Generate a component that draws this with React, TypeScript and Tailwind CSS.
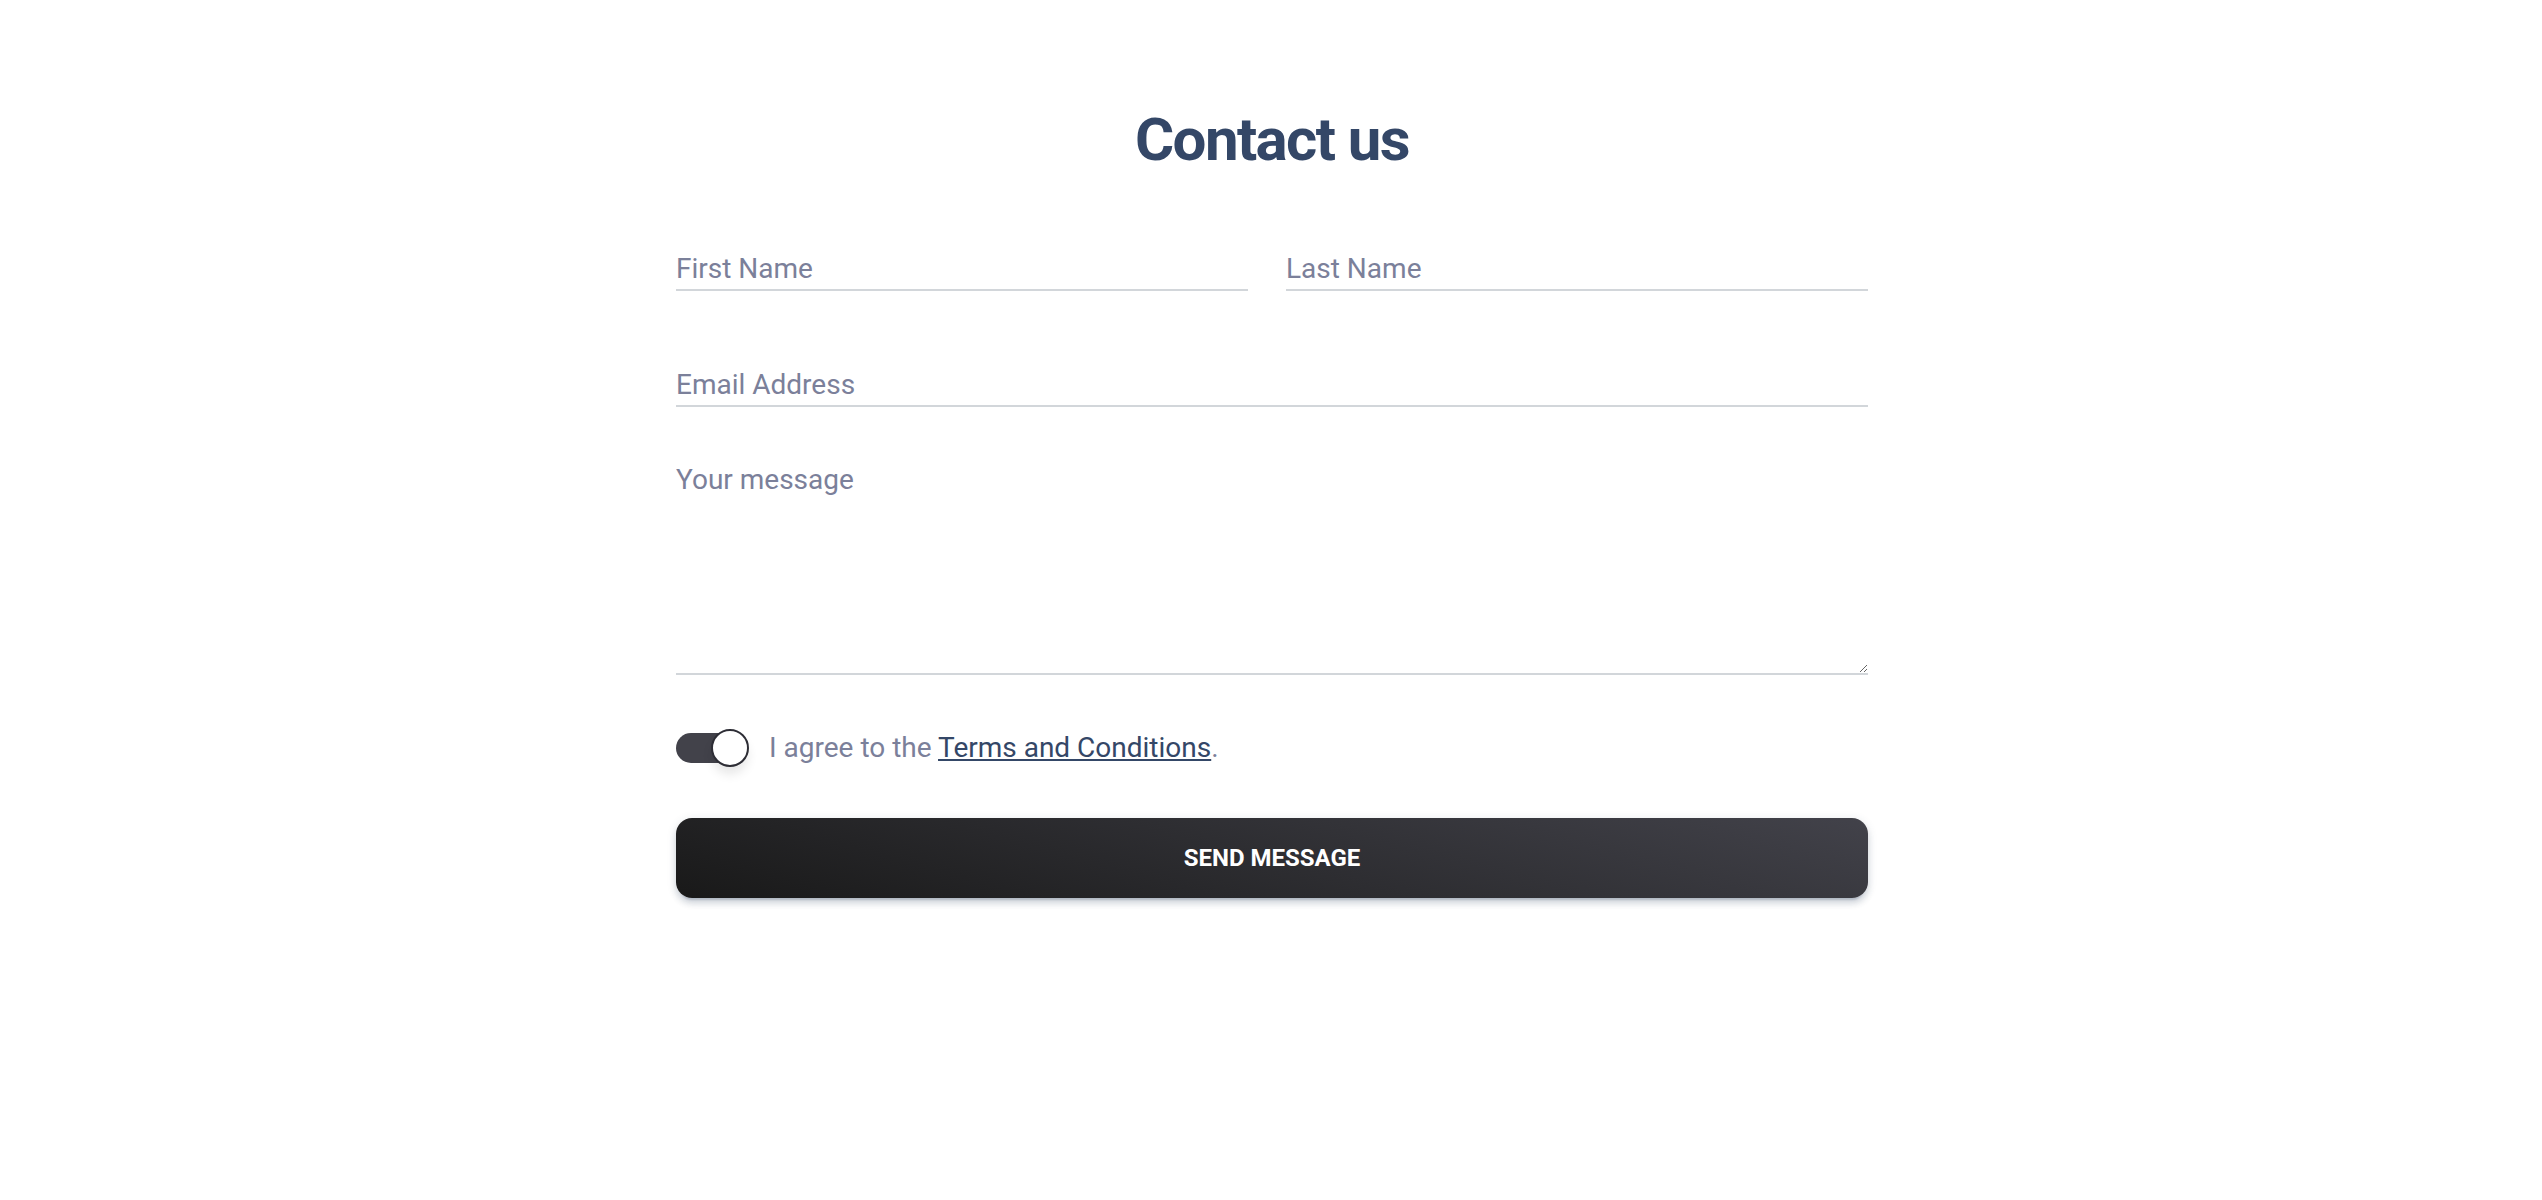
import React, { useState } from 'react';

const ContactForm = () => {
  const [agree, setAgree] = useState(true);

  return (
    <section className="min-h-screen bg-white pt-[99px] font-[Roboto,sans-serif]">
      <div className="mx-auto w-[1192px] translate-x-[1px]">
        <h3 className="text-center text-[60px] font-bold leading-[82px] tracking-[-1.6px] text-[#344767]">
          Contact us
        </h3>

        <form className="mt-[66px]" onSubmit={(e) => e.preventDefault()}>
          <div className="flex gap-[38px]">
            <input
              type="text"
              placeholder="First Name"
              className="h-[44px] w-[572px] border-b-2 border-[#d2d6da] text-[28px] text-[#495057] outline-none placeholder:text-[#7b809a]"
            />
            <input
              type="text"
              placeholder="Last Name"
              className="h-[44px] flex-1 border-b-2 border-[#d2d6da] text-[28px] text-[#495057] outline-none placeholder:text-[#7b809a]"
            />
          </div>

          <input
            type="email"
            placeholder="Email Address"
            className="mt-[72px] block h-[44px] w-full border-b-2 border-[#d2d6da] text-[28px] text-[#495057] outline-none placeholder:text-[#7b809a]"
          />

          <textarea
            placeholder="Your message"
            className="mt-[52px] block h-[216px] w-full border-b-2 border-[#d2d6da] text-[28px] leading-[42px] text-[#495057] outline-none placeholder:text-[#7b809a]"
          />

          <div className="mt-[52px] flex h-[42px] items-center">
            <button
              type="button"
              onClick={() => setAgree(!agree)}
              className={`relative flex h-[30px] w-[60px] items-center rounded-full ${agree ? 'bg-[#42424a]' : 'bg-[#e9ecef]'}`}
            >
              <span
                className={`absolute h-[38px] w-[38px] rounded-full border-2 border-[#2d2d35] bg-white shadow-[0_8px_12px_-2px_rgba(20,20,20,0.12)] ${agree ? 'left-[35px]' : 'left-[-4px]'}`}
              />
            </button>
            <label className="ml-[33px] text-[28px] leading-[42px] text-[#7b809a]">
              I agree to the{' '}
              <a href="#" className="text-[#344767] underline">
                Terms and Conditions
              </a>
              .
            </label>
          </div>

          <button
            type="submit"
            className="mt-[49px] block h-[80px] w-full rounded-[16px] bg-[linear-gradient(195deg,#42424a_0%,#191919_100%)] text-[24px] font-bold uppercase text-white shadow-[0_6px_6px_0_rgba(52,71,103,0.15),0_6px_2px_-4px_rgba(52,71,103,0.2),0_2px_10px_0_rgba(52,71,103,0.15)]"
          >
            Send Message
          </button>
        </form>
      </div>
    </section>
  );
};

export default function App() {
  return <ContactForm />;
}
